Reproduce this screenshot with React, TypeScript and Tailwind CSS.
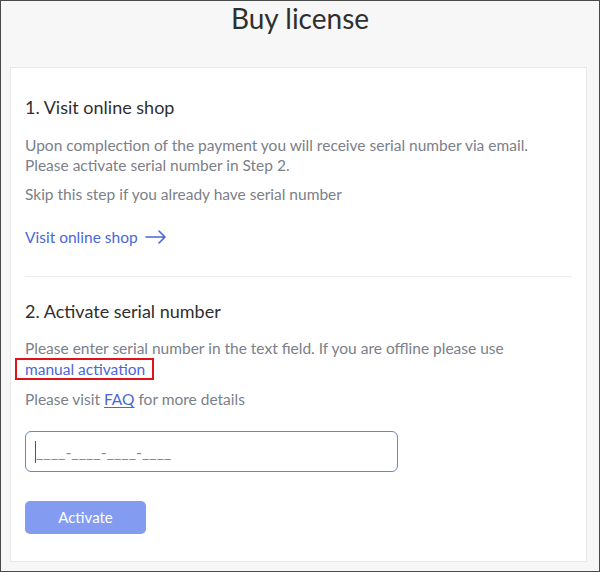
import React from "react";

const font = { fontFamily: "Lato, 'Open Sans', sans-serif" };

export default function App() {
  return (
    <div
      className="w-[600px] h-[572px] bg-[#f7f7f7] border border-[#4a4a4a] flex flex-col overflow-hidden"
      style={font}
    >
      <h1 className="text-[28px] leading-[36px] text-center text-[#2f2f2f] -mt-px">Buy license</h1>

      <div className="mt-[31px] ml-[9px] mr-[12px] bg-white border border-[#e8e8e8] px-[14px] pt-[27px] pb-[27px] flex flex-col">
        <h2 className="text-[18px] leading-[24px] text-[#2f2f2f]">1. Visit online shop</h2>
        <p className="mt-[16px] text-[15.5px] leading-[20px] text-[#7b808a]">
          Upon complection of the payment you will receive serial number via email.
          <br />
          Please activate serial number in Step 2.
        </p>
        <p className="mt-[9px] text-[15.5px] leading-[20px] text-[#7b808a]">
          Skip this step if you already have serial number
        </p>
        <a className="mt-[23px] flex items-center gap-[7px] text-[15.5px] leading-[20px] text-[#4a67d6] w-fit cursor-pointer">
          Visit online shop
          <svg width="22" height="14" viewBox="0 0 22 14" fill="none" stroke="#4a67d6" strokeWidth="1.6" strokeLinecap="round" strokeLinejoin="round">
            <path d="M1 7h19M14 1l6 6-6 6" />
          </svg>
        </a>

        <div className="mt-[29px] h-px bg-[#ececec]" />

        <h2 className="mt-[22px] text-[18px] leading-[24px] text-[#2f2f2f]">2. Activate serial number</h2>
        <p className="mt-[15px] text-[15.5px] leading-[21px] text-[#7b808a]">
          Please enter serial number in the text field. If you are offline please use
          <br />
          <span className="relative text-[#4a67d6] cursor-pointer">
            manual activation
            <span className="absolute -left-[10px] -right-[9px] -top-[2px] -bottom-[2px] border-2 border-[#e0121a]" />
          </span>
        </p>
        <p className="mt-[9px] text-[15.5px] leading-[20px] text-[#7b808a]">
          Please visit <span className="text-[#4a67d6] underline underline-offset-2">FAQ</span> for more details
        </p>

        <div className="mt-[22px] w-[373px] h-[41px] border-[1.5px] border-[#6a83d2] rounded-[6px] flex items-center px-[9px]">
          <span className="w-px h-[22px] bg-[#555]" />
          <span className="text-[16px] text-[#8a8a8a]">____-____-____-____</span>
        </div>

        <button className="mt-[29px] w-[121px] h-[33px] rounded-[5px] bg-[#839cf1] text-white text-[15px]">
          Activate
        </button>
      </div>
    </div>
  );
}
